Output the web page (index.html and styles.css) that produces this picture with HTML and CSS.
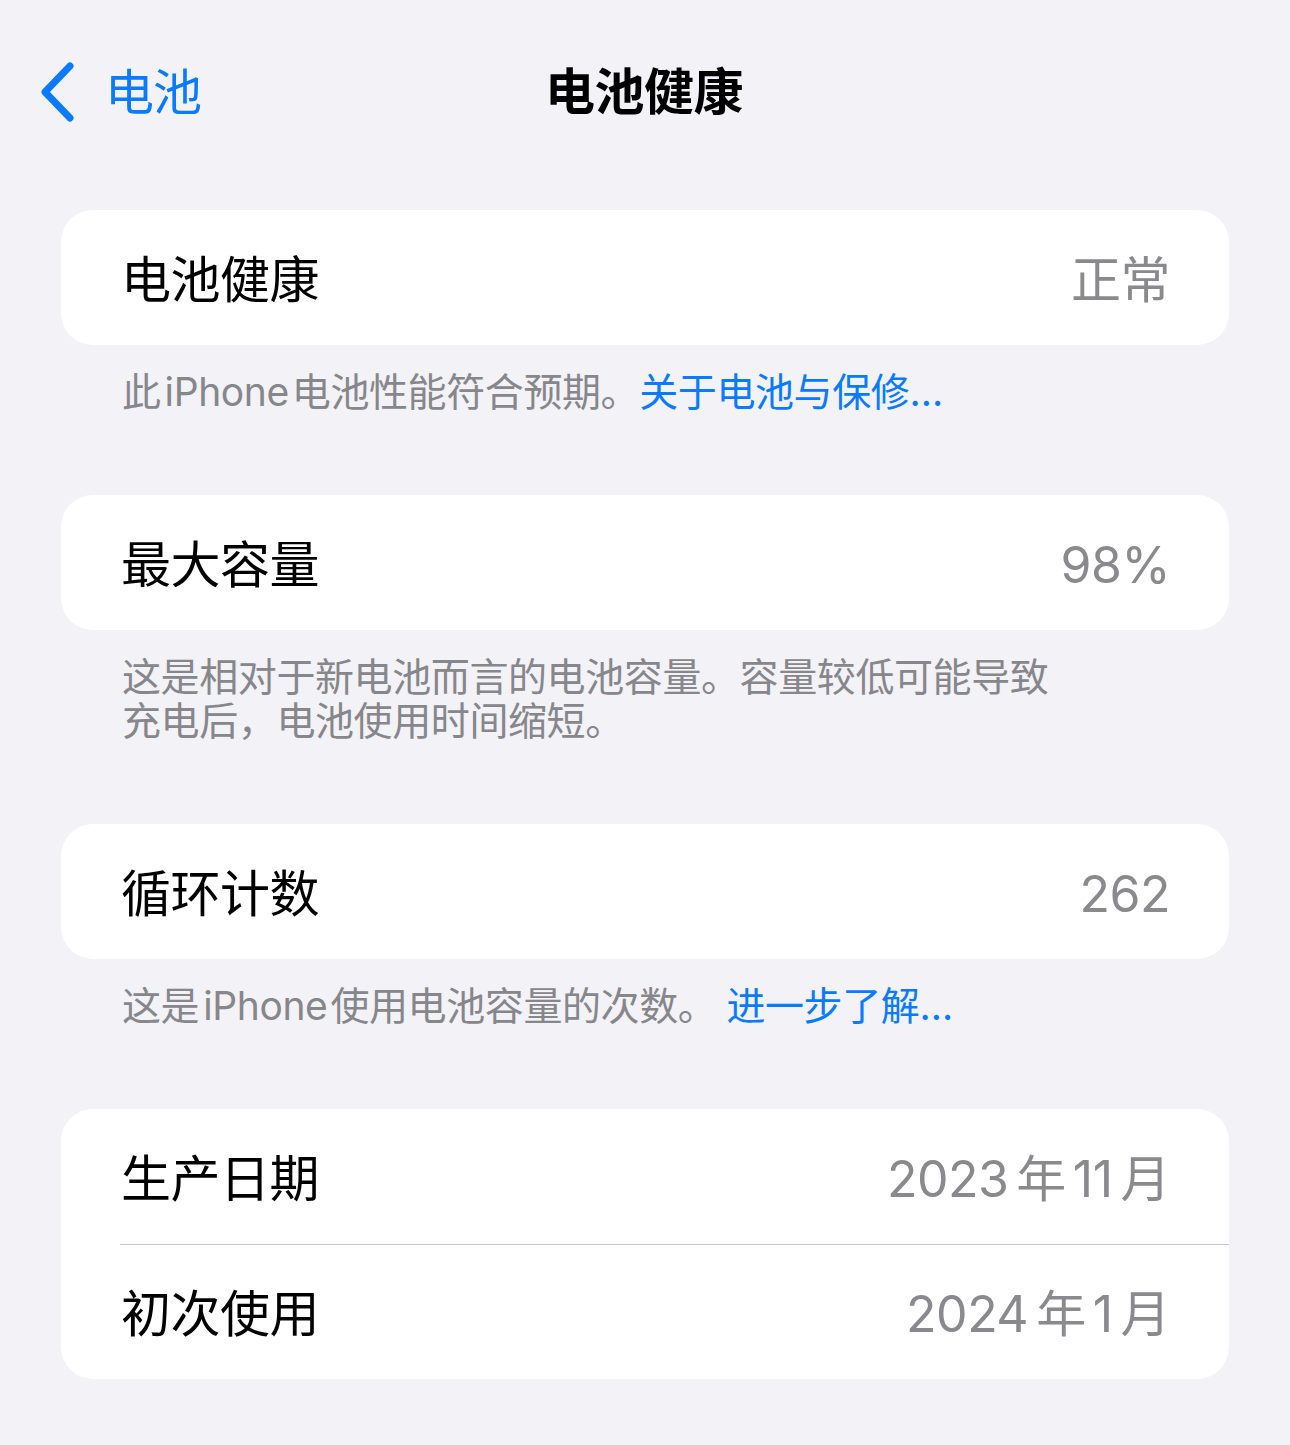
FILE: index.html
```html
<!DOCTYPE html>
<html lang="zh-CN">
<head>
<meta charset="utf-8">
<title>电池健康</title>
<link rel="stylesheet" href="styles.css">
</head>
<body>
<div class="screen">
  <header class="nav">
    <div class="nav-back">
      <svg class="chev" width="40" height="60" viewBox="0 0 40 60" aria-hidden="true">
        <polyline points="31,4 6,30 31,56" fill="none" stroke="#0a7aff" stroke-width="7" stroke-linecap="round" stroke-linejoin="round"/>
      </svg>
      <span class="back-label">电池</span>
    </div>
    <h1 class="nav-title">电池健康</h1>
    <div class="nav-spacer"></div>
  </header>

  <main class="content">
    <section class="group">
      <div class="card">
        <div class="row"><span class="label">电池健康</span><span class="value">正常</span></div>
      </div>
      <p class="footer">此<span class="lat">iPhone</span>电池性能符合预期。<span class="link">关于电池与保修…</span></p>
    </section>

    <section class="group">
      <div class="card">
        <div class="row"><span class="label">最大容量</span><span class="value">98%</span></div>
      </div>
      <p class="footer">这是相对于新电池而言的电池容量。容量较低可能导致<br>充电后，电池使用时间缩短。</p>
    </section>

    <section class="group">
      <div class="card">
        <div class="row"><span class="label">循环计数</span><span class="value">262</span></div>
      </div>
      <p class="footer">这是<span class="lat">iPhone</span>使用电池容量的次数。<span class="link gap">进一步了解…</span></p>
    </section>

    <section class="group">
      <div class="card">
        <div class="row"><span class="label">生产日期</span><span class="value">2023<span class="cj">年</span>11<span class="cj">月</span></span></div>
        <div class="row sep"><span class="label">初次使用</span><span class="value">2024<span class="cj">年</span>1<span class="cj">月</span></span></div>
      </div>
    </section>
  </main>
</div>
</body>
</html>
```

FILE: styles.css
```css
* { box-sizing: border-box; }

html, body {
  margin: 0;
  padding: 0;
  background: #f2f2f7;
}

body {
  font-family: "Inter", "Noto Sans CJK SC", "Noto Sans", sans-serif;
  color: #000;
  -webkit-font-smoothing: antialiased;
}

.screen {
  width: 1290px;
  min-height: 1445px;
  background: #f2f2f7;
}

.nav {
  height: 184px;
  display: grid;
  grid-template-columns: 1fr auto 1fr;
  align-items: center;
}

.nav-back {
  display: flex;
  align-items: center;
  padding-left: 39px;
  gap: 26px;
}

.chev { display: block; }

.back-label {
  font-size: 49px;
  color: #0a7aff;
  line-height: 1;
  letter-spacing: -1px;
}

.nav-title {
  margin: 0;
  font-size: 50px;
  font-weight: 700;
  line-height: 1;
  letter-spacing: -0.5px;
  margin-left: -2px;
}

.content {
  padding: 26px 61px 0;
}

.card {
  background: #fff;
  border-radius: 32px;
  overflow: hidden;
}

.row {
  height: 135px;
  display: flex;
  align-items: center;
  justify-content: space-between;
  padding: 5px 61px 0 60px;
  position: relative;
}

.row.sep::before {
  content: "";
  position: absolute;
  top: 0;
  left: 59px;
  right: 0;
  height: 1px;
  background: #c6c6c8;
}

.label {
  font-size: 50px;
  line-height: 1;
  letter-spacing: -0.5px;
}

.value {
  font-size: 50px;
  line-height: 1;
  color: #8a8a8e;
  letter-spacing: -0.5px;
  margin-right: -2px;
}

.value .cj {
  margin: 0 7px 0 8px;
}

.value .cj:last-child {
  margin-right: 0;
}

.footer {
  margin: 0;
  padding: 25px 61px 81px 61px;
  font-size: 39px;
  line-height: 44px;
  color: #86868b;
  letter-spacing: -0.4px;
}

.footer .lat {
  margin: 0 3px 0 4px;
}

.link {
  color: #0a7aff;
}

.link.gap {
  margin-left: 10px;
}
```
